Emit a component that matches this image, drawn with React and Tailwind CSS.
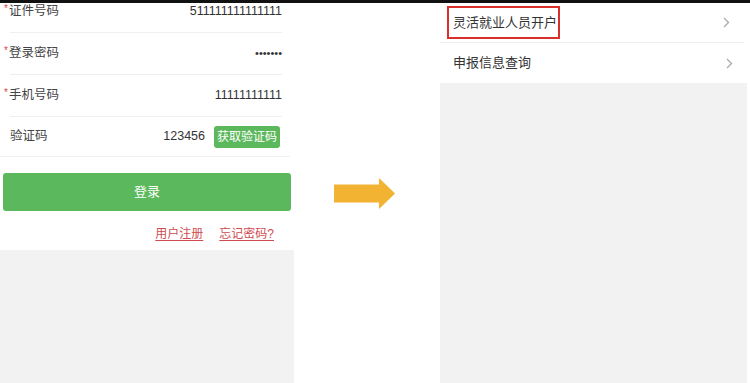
import React from 'react';

const FONT = { fontFamily: '"Liberation Sans", "Noto Sans CJK SC", sans-serif' };

// 左侧登录表单的一行
function FieldRow({ label, required, children, last }) {
  if (last) {
    return (
      <div className="shrink-0 flex items-center h-[40px] w-[290px] pl-[10px] pr-[10px] border-b border-[#efefef]">
        <span className="text-[12.5px] text-[#444]">{label}</span>
        <div className="ml-auto flex items-center">{children}</div>
      </div>
    );
  }
  return (
    <div className="shrink-0 flex items-center h-[42px] ml-[10px] mr-[12px] border-b border-[#efefef]">
      <span className="text-[12.5px] text-[#444] flex items-center">
        {required && <span className="text-[#e0474c] text-[10px] -ml-[6px] mr-[1px] -mt-[6px]">*</span>}
        {label}
      </span>
      <div className="ml-auto flex items-center">{children}</div>
    </div>
  );
}

function Chevron() {
  return (
    <svg width="7" height="11" viewBox="0 0 7 11" fill="none">
      <path d="M1 1l4.5 4.5L1 10" stroke="#aaa" strokeWidth="1.3" />
    </svg>
  );
}

export default function App() {
  return (
    <div className="w-[750px] h-[383px] flex flex-col bg-white overflow-hidden" style={FONT}>
      {/* 顶部黑条 */}
      <div className="h-[3px] bg-[#111] shrink-0" />

      <div className="flex flex-1 overflow-hidden">
        {/* ── 左：登录页 ── */}
        <div className="w-[294px] shrink-0 flex flex-col bg-[#f2f2f2] overflow-hidden">
          <div className="bg-white h-[259px] shrink-0 -mt-[12px] flex flex-col">
            <FieldRow label="证件号码" required>
              <span className="text-[12.5px] text-[#333]">511111111111111</span>
            </FieldRow>
            <FieldRow label="登录密码" required>
              <span className="text-[11px] text-[#333]">•••••••</span>
            </FieldRow>
            <FieldRow label="手机号码" required>
              <span className="text-[12.5px] text-[#333]">11111111111</span>
            </FieldRow>
            <FieldRow label="验证码" last>
              <span className="text-[12.5px] text-[#333] mr-[9px]">123456</span>
              <span className="h-[22px] w-[66px] flex items-center justify-center rounded-[3px] bg-[#5cb85c] text-white text-[12px]">
                获取验证码
              </span>
            </FieldRow>

            <div className="shrink-0 mt-[16px] mx-[3px] h-[38px] rounded-[3px] bg-[#5cb85c] flex items-center justify-center text-white text-[13px]">
              登录
            </div>

            <div className="shrink-0 flex justify-end gap-[16px] pr-[20px] mt-[14px] text-[12px] text-[#cf4b4f]">
              <span className="underline underline-offset-2">用户注册</span>
              <span className="underline underline-offset-2">忘记密码?</span>
            </div>
          </div>
        </div>

        {/* ── 中：箭头 ── */}
        <div className="flex-1 bg-white flex items-start justify-center pt-[175px] pr-[4px]">
          <svg width="62" height="31" viewBox="0 0 62 31">
            <path d="M0 6.5h45V0l16 15.5L45 31v-6.5H0z" fill="#f2b232" />
          </svg>
        </div>

        {/* ── 右：菜单页 ── */}
        <div className="w-[307px] shrink-0 bg-[#f2f2f2] flex flex-col">
          <div className="bg-white flex flex-col">
            <div className="flex items-center h-[40px] pl-[13px] pr-[14px] border-b border-[#efefef] mr-[3px]">
              <span className="-ml-[6px] h-[33px] pl-[4px] pr-[1px] border-2 border-[#d9302c] flex items-center text-[13px] text-[#333]">
                灵活就业人员开户
              </span>
              <span className="ml-auto"><Chevron /></span>
            </div>
            <div className="flex items-center h-[40px] pl-[13px] pr-[14px]">
              <span className="text-[13px] text-[#333]">申报信息查询</span>
              <span className="ml-auto"><Chevron /></span>
            </div>
          </div>
        </div>

        <div className="w-[3px] bg-white shrink-0" />
      </div>
    </div>
  );
}
